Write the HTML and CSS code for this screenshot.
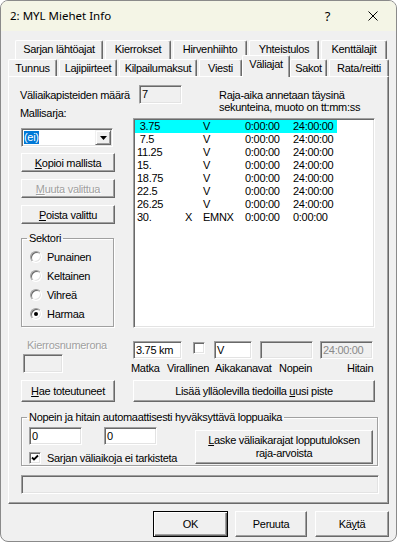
FILE: index.html
```html
<!DOCTYPE html>
<html lang="fi">
<head>
    <meta charset="UTF-8">
    <title>2: MYL Miehet Info</title>
    <link rel="stylesheet" href="styles.css">
</head>
<body>
<div class="window">
    <div class="titlebar">
        <span class="title">2: MYL Miehet Info</span>
        <span class="help">?</span>
        <span class="close">
            <svg width="10" height="10" viewBox="0 0 10 10"><path d="M0.5 0.5L9.5 9.5M9.5 0.5L0.5 9.5" stroke="#000" stroke-width="1"/></svg>
        </span>
    </div>

    <div class="frame">
        <!-- two rows of tabs, the front row holds the selected one -->
        <div class="tab-row back">
            <span class="tab w88">Sarjan lähtöajat</span>
            <span class="tab w66">Kierrokset</span>
            <span class="tab w74">Hirvenhiihto</span>
            <span class="tab w70">Yhteistulos</span>
            <span class="tab w66">Kenttälajit</span>
        </div>
        <div class="tab-row front">
            <span class="tab w49">Tunnus</span>
            <span class="tab w58">Lajipiirteet</span>
            <span class="tab w78">Kilpailumaksut</span>
            <span class="tab w43">Viesti</span>
            <span class="tab active">Väliajat</span>
            <span class="tab w37">Sakot</span>
            <span class="tab w60">Rata/reitti</span>
        </div>

        <div class="panel">
            <div class="columns">
                <div class="col-left">
                    <div class="label count-label">Väliaikapisteiden määrä</div>
                    <div class="label model-label">Mallisarja:</div>
                    <div class="combo">
                        <span class="combo-value"><span class="hilite">(ei)</span></span>
                        <span class="combo-btn">
                            <svg width="7" height="4" viewBox="0 0 7 4"><path d="M0 0H7L3.5 4Z" fill="#000"/></svg>
                        </span>
                    </div>
                    <button class="btn side-btn first"><u>K</u>opioi mallista</button>
                    <button class="btn side-btn disabled"><u>M</u>uuta valittua</button>
                    <button class="btn side-btn"><u>P</u>oista valittu</button>

                    <fieldset class="group sector">
                        <legend>Sektori</legend>
                        <div class="radio-list">
                            <div class="radio-row"><span class="radio"></span>Punainen</div>
                            <div class="radio-row"><span class="radio"></span>Keltainen</div>
                            <div class="radio-row"><span class="radio"></span>Vihreä</div>
                            <div class="radio-row"><span class="radio on"></span>Harmaa</div>
                        </div>
                    </fieldset>

                    <div class="label disabled lap-label">Kierrosnumerona</div>
                    <div class="edit off lap-edit"></div>
                </div>

                <div class="col-right">
                    <div class="top-row">
                        <div class="edit count-edit">7</div>
                        <div class="note">Raja-aika annetaan täysinä<br>sekunteina, muoto on tt:mm:ss</div>
                    </div>

                    <div class="listbox">
                        <div class="row selected"><span>&nbsp;3.75</span><span></span><span>V</span><span>0:00:00</span><span>24:00:00</span></div>
                        <div class="row"><span>&nbsp;7.5</span><span></span><span>V</span><span>0:00:00</span><span>24:00:00</span></div>
                        <div class="row"><span>11.25</span><span></span><span>V</span><span>0:00:00</span><span>24:00:00</span></div>
                        <div class="row"><span>15.</span><span></span><span>V</span><span>0:00:00</span><span>24:00:00</span></div>
                        <div class="row"><span>18.75</span><span></span><span>V</span><span>0:00:00</span><span>24:00:00</span></div>
                        <div class="row"><span>22.5</span><span></span><span>V</span><span>0:00:00</span><span>24:00:00</span></div>
                        <div class="row"><span>26.25</span><span></span><span>V</span><span>0:00:00</span><span>24:00:00</span></div>
                        <div class="row"><span>30.</span><span>X</span><span>EMNX</span><span>0:00:00</span><span>0:00:00</span></div>
                    </div>

                    <div class="edit-row">
                        <div class="edit dist-edit">3.75 km</div>
                        <span class="check official"></span>
                        <div class="edit chan-edit">V</div>
                        <div class="edit off fast-edit"></div>
                        <div class="edit off slow-edit">24:00:00</div>
                    </div>
                    <div class="label-row">
                        <span class="lbl-matka">Matka</span>
                        <span class="lbl-viral">Virallinen</span>
                        <span class="lbl-kanavat">Aikakanavat</span>
                        <span class="lbl-nopein">Nopein</span>
                        <span>Hitain</span>
                    </div>
                </div>
            </div>

            <div class="button-row">
                <button class="btn fetch-btn"><u>H</u>ae toteutuneet</button>
                <button class="btn add-btn">Lisää ylläolevilla tiedoilla <u>u</u>usi piste</button>
            </div>

            <fieldset class="group limits">
                <legend>Nopein ja hitain automaattisesti hyväksyttävä loppuaika</legend>
                <div class="limits-body">
                    <div class="limits-left">
                        <div class="limit-edits">
                            <div class="edit limit-edit">0</div>
                            <div class="edit limit-edit">0</div>
                        </div>
                        <div class="check-row">
                            <span class="check">
                                <svg width="10" height="10" viewBox="0 0 10 10"><path d="M2 4.5L4 6.5L8 2.5" stroke="#000" stroke-width="1.8" fill="none"/></svg>
                            </span>
                            Sarjan väliaikoja ei tarkisteta
                        </div>
                    </div>
                    <button class="btn calc-btn"><u>L</u>aske väliaikarajat lopputuloksen<br>raja-arvoista</button>
                </div>
            </fieldset>

            <div class="status"></div>
        </div>

        <div class="dialog-buttons">
            <button class="btn default ok-btn">OK</button>
            <button class="btn cancel-btn">Peruuta</button>
            <button class="btn apply-btn">Kä<u>y</u>tä</button>
        </div>
    </div>
</div>
</body>
</html>
```

FILE: styles.css
```css
/* Reset */
* {
    margin: 0;
    padding: 0;
    box-sizing: border-box;
}

body {
    background: #fff;
    font-family: "Liberation Sans", Arial, sans-serif;
    font-size: 11px;
    line-height: 12px;
    letter-spacing: -0.3px;
    color: #000;
}

.window {
    width: 397px;
    height: 542px;
    background: #f0f0f0;
    border: 1px solid #8a8a8a;
    border-radius: 8px;
    overflow: hidden;
}

/* title bar */
.titlebar {
    height: 30px;
    display: flex;
    align-items: center;
    padding-left: 9px;
    background: #f4f5e6;
    font-family: "Noto Sans", sans-serif;
    font-size: 11.5px;
    letter-spacing: 0;
}

.title {
    flex: 1;
}

.help {
    width: 45px;
    text-align: center;
    font-size: 13px;
}

.close {
    width: 46px;
    display: flex;
    justify-content: center;
}

.frame {
    padding: 9px 7px 0;
}

/* tabs */
.tab-row {
    display: flex;
    gap: 2px;
}

.tab-row.back {
    height: 19px;
    margin-left: 7px;
}

.tab-row.front {
    height: 17px;
}

.tab {
    flex: none;
    text-align: center;
    white-space: nowrap;
    line-height: 17px;
    border-top: 1px solid #fff;
    border-left: 1px solid #fff;
    border-right: 1px solid #696969;
    border-radius: 2px 2px 0 0;
    box-shadow: inset -1px 0 #a0a0a0;
    background: #f0f0f0;
}

.w37 { width: 37px; }
.w43 { width: 43px; }
.w49 { width: 49px; }
.w58 { width: 58px; }
.w60 { width: 60px; }
.w66 { width: 66px; }
.w70 { width: 70px; }
.w74 { width: 74px; }
.w78 { width: 78px; }
.w88 { width: 88px; }

.front .tab {
    line-height: 16px;
}

.front .tab.active {
    position: relative;
    z-index: 1;
    width: 48px;
    height: 22px;
    margin: -4px -2px 0;
    padding-top: 1px;
    line-height: 14px;
}

.panel {
    border: 1px solid;
    border-color: #fff #696969 #696969 #fff;
    box-shadow: inset -1px -1px #a0a0a0;
    padding: 8px 11px 9px 12px;
}

/* classic controls */
.btn {
    display: block;
    font: inherit;
    letter-spacing: inherit;
    color: #000;
    background: #f0f0f0;
    border: 1px solid;
    border-color: #fff #696969 #696969 #fff;
    box-shadow: inset -1px -1px #a0a0a0;
    text-align: center;
}

.btn.disabled,
.label.disabled {
    color: #a0a0a0;
    text-shadow: 1px 1px #fff;
}

.btn.default {
    border: 1px solid #000;
    box-shadow: inset 1px 1px #fff, inset -1px -1px #696969, inset -2px -2px #a0a0a0;
}

.edit {
    background: #fff;
    border: 1px solid;
    border-color: #a0a0a0 #fff #fff #a0a0a0;
    box-shadow: inset 1px 1px #696969, inset -1px -1px #e3e3e3;
    padding-left: 2px;
    line-height: 16px;
    white-space: nowrap;
}

.edit.off {
    background: #f0f0f0;
    color: #8a8a8a;
}

.check {
    display: flex;
    align-items: center;
    justify-content: center;
    width: 12px;
    height: 12px;
    background: #fff;
    border: 1px solid;
    border-color: #a0a0a0 #fff #fff #a0a0a0;
    box-shadow: inset 1px 1px #696969, inset -1px -1px #e3e3e3;
}

.group {
    border: 1px solid #a0a0a0;
    box-shadow: 1px 1px #fff, inset 1px 1px #fff;
}

.group legend {
    margin-left: 5px;
    padding: 0 2px;
    line-height: 12px;
}

/* layout of the Väliajat page */
.columns {
    display: flex;
    gap: 18px;
}

.col-left {
    width: 94px;
    flex: none;
}

.col-right {
    width: 242px;
    flex: none;
}

.label {
    white-space: nowrap;
}

.count-label {
    margin: 4px 0 0 -1px;
}

.model-label {
    margin: 6px 0 0 -1px;
}

.combo {
    display: flex;
    width: 92px;
    height: 19px;
    margin-top: 9px;
    padding: 1px;
    background: #fff;
    border: 1px solid;
    border-color: #a0a0a0 #fff #fff #a0a0a0;
    box-shadow: inset 1px 1px #696969, inset -1px -1px #e3e3e3;
}

.combo-value {
    flex: 1;
    padding: 1px 0 0 1px;
}

.hilite {
    display: inline-block;
    background: #0078d7;
    color: #fff;
    line-height: 13px;
}

.combo-btn {
    width: 16px;
    display: flex;
    align-items: center;
    justify-content: center;
    background: #f0f0f0;
    border: 1px solid;
    border-color: #f0f0f0 #696969 #696969 #f0f0f0;
    box-shadow: inset 1px 1px #fff, inset -1px -1px #a0a0a0;
}

.side-btn {
    width: 94px;
    height: 19px;
    margin-top: 7px;
}

.side-btn.first {
    margin-top: 6px;
}

.sector {
    width: 93px;
    margin-top: 8px;
}

.radio-list {
    padding: 3px 0 3px 8px;
}

.radio-row {
    display: flex;
    align-items: center;
    height: 19px;
}

.radio {
    display: flex;
    align-items: center;
    justify-content: center;
    width: 12px;
    height: 12px;
    margin-right: 5px;
    border-radius: 50%;
    background: #fff;
    border: 1px solid;
    border-color: #a0a0a0 #fff #fff #a0a0a0;
    box-shadow: inset 1px 1px #696969, inset -1px -1px #e3e3e3;
}

.radio.on::after {
    content: "";
    width: 4px;
    height: 4px;
    border-radius: 50%;
    background: #000;
}

.lap-label {
    margin: 12px 0 0 6px;
}

.lap-edit {
    width: 40px;
    height: 19px;
    margin: 3px 0 0 2px;
}

.top-row {
    display: flex;
    height: 28px;
}

.count-edit {
    width: 43px;
    height: 19px;
    margin-left: 6px;
    line-height: 17px;
    background: #f0f0f0;
}

.note {
    margin: 4px 0 0 37px;
    white-space: nowrap;
}

.listbox {
    height: 210px;
    margin-top: 5px;
    background: #fff;
    border: 1px solid;
    border-color: #a0a0a0 #fff #fff #a0a0a0;
    box-shadow: inset 1px 1px #696969, inset -1px -1px #e3e3e3;
    padding: 1px 0 0 1px;
}

.row {
    display: grid;
    grid-template-columns: 48px 18px 42px 48px 1fr;
    width: 202px;
    height: 13px;
    line-height: 13px;
    padding-left: 2px;
    white-space: nowrap;
}

.row.selected {
    background: #00ffff;
}

.edit-row {
    display: flex;
    align-items: flex-start;
    height: 18px;
    margin-top: 13px;
}

.edit-row .edit {
    height: 18px;
}

.dist-edit {
    width: 49px;
}

.official {
    margin: 1px 0 0 11px;
}

.chan-edit {
    width: 38px;
    margin-left: 9px;
}

.fast-edit {
    width: 53px;
    margin-left: 8px;
}

.slow-edit {
    width: 53px;
    margin-left: 7px;
}

.label-row {
    display: flex;
    margin: 3px 0 0 -2px;
    white-space: nowrap;
}

.lbl-matka { width: 36px; }
.lbl-viral { width: 48px; }
.lbl-kanavat { width: 64px; }
.lbl-nopein { width: 68px; }

.button-row {
    display: flex;
    gap: 18px;
    margin-top: 6px;
}

.button-row .btn {
    height: 22px;
}

.fetch-btn {
    width: 94px;
}

.add-btn {
    width: 242px;
}

.limits {
    width: 357px;
    margin-top: 9px;
}

.limits-body {
    display: flex;
    padding: 0 4px 1px 7px;
}

.limits-left {
    flex: 1;
}

.limit-edits {
    display: flex;
    gap: 22px;
    margin-top: 4px;
}

.limit-edit {
    width: 53px;
    height: 18px;
}

.check-row {
    display: flex;
    align-items: center;
    gap: 6px;
    height: 12px;
    margin-top: 7px;
}

.calc-btn {
    width: 178px;
    height: 34px;
    margin-top: 7px;
    line-height: 13px;
}

.status {
    width: 358px;
    height: 19px;
    margin-top: 9px;
    border: 1px solid;
    border-color: #a0a0a0 #fff #fff #a0a0a0;
    box-shadow: inset 1px 1px #696969, inset -1px -1px #e3e3e3;
}

.dialog-buttons {
    display: flex;
    justify-content: flex-end;
    margin-top: 7px;
}

.dialog-buttons .btn {
    height: 26px;
}

.ok-btn { width: 75px; }
.cancel-btn { width: 72px; margin-left: 7px; }
.apply-btn { width: 74px; margin-left: 8px; }
```
